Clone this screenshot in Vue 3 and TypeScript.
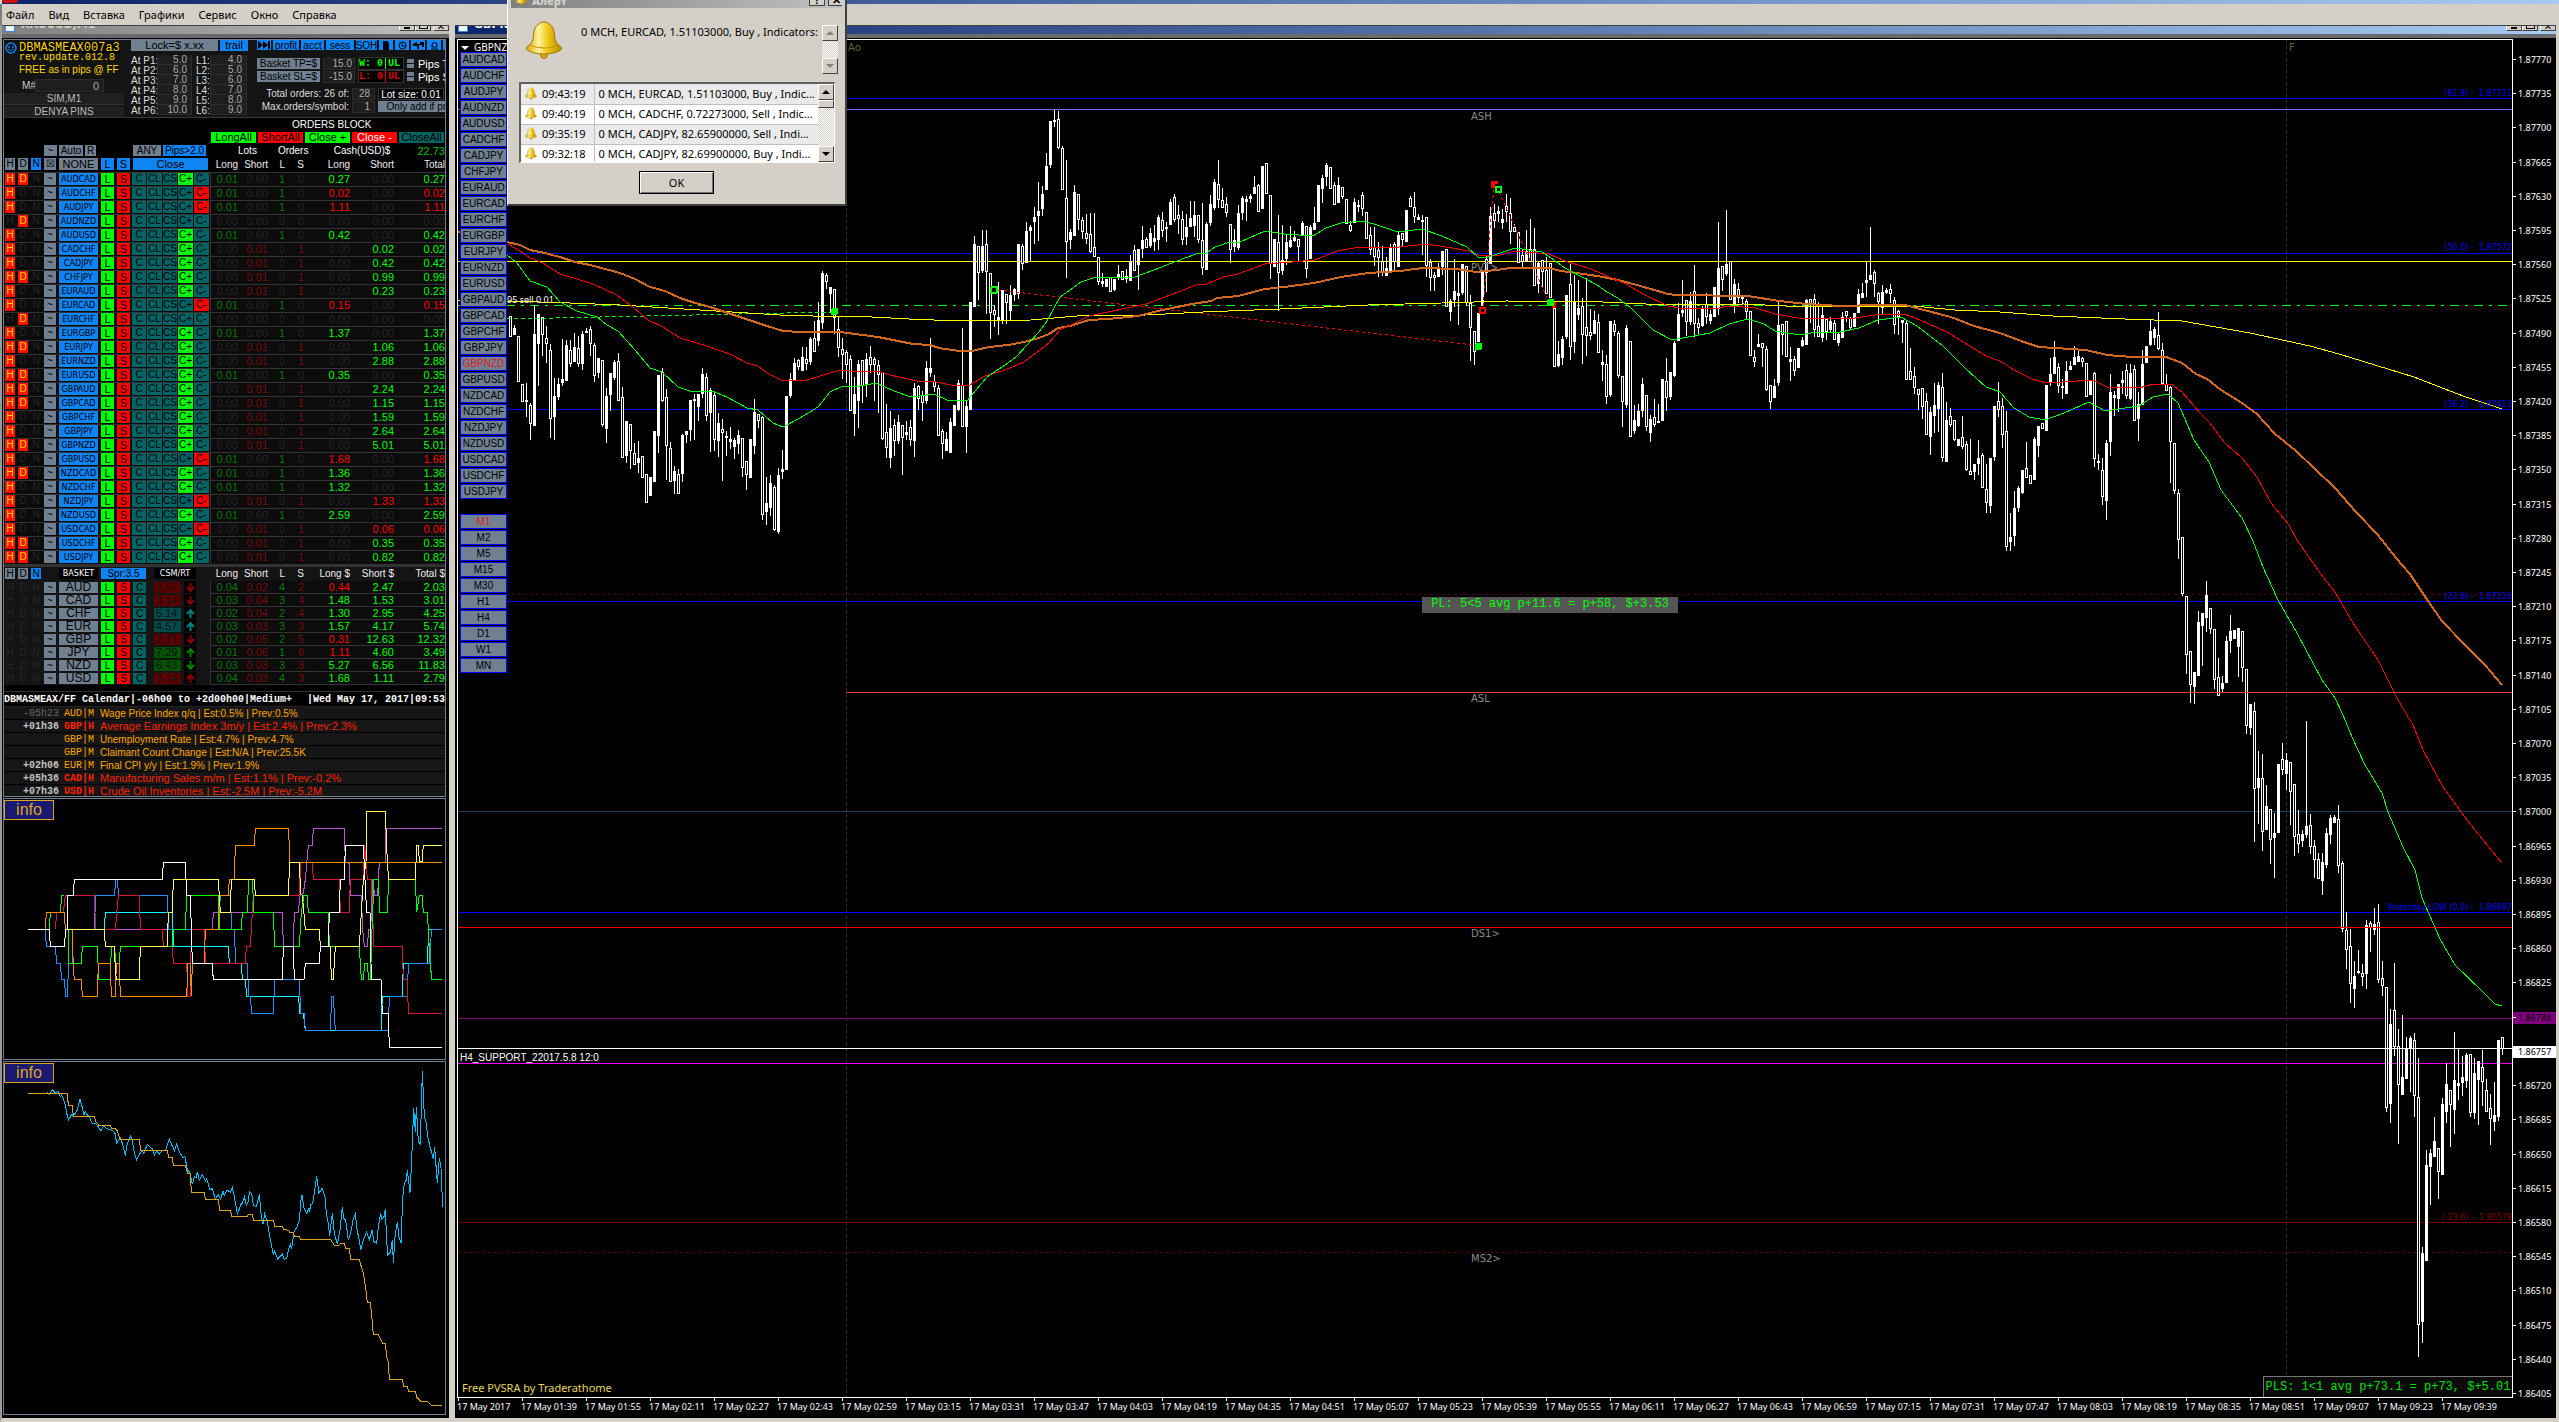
<script setup lang="ts">
const menu = ['Файл', 'Вид', 'Вставка', 'Графики', 'Сервис', 'Окно', 'Справка']

interface Pair { name: string; h: boolean; d: boolean; side: string; cash: number }
const pairs: Pair[] = `AUDCAD HD L 0.27|AUDCHF H L -0.02|AUDJPY H L -1.11|AUDNZD D - 0|AUDUSD H L 0.42|CADCHF H S 0.02|CADJPY H S 0.42
CHFJPY HD S 0.99|EURAUD H S 0.23|EURCAD H L -0.15|EURCHF D - 0|EURGBP H L 1.37|EURJPY HD S 1.06|EURNZD H S 2.88
EURUSD HD L 0.35|GBPAUD HD S 2.24|GBPCAD HD S 1.15|GBPCHF H S 1.59|GBPJPY H S 2.64|GBPNZD HD S 5.01|GBPUSD H L -1.68
NZDCAD HD L 1.36|NZDCHF H L 1.32|NZDJPY H S -1.33|NZDUSD H L 2.59|USDCAD H S -0.06|USDCHF HD S 0.35|USDJPY HD S 0.82`
  .split(/[|\n]/).map(r => {
    const [name, flags, side, cash] = r.trim().split(' ')
    return { name, h: flags.includes('H'), d: flags.includes('D'), side, cash: Number(cash) }
  })
const fmt = (n: number) => Math.abs(n).toFixed(2)
const tone = (n: number) => (n === 0 ? 'zero' : n > 0 ? 'up' : 'down')

interface Basket { name: string; csm: string; tint: string; arrow: string; dir: string; cells: string[] }
const baskets: Basket[] = [
  'AUD 3.57 red v red 0.04 0.02 4 2 -0.44 2.47 2.03',
  'CAD 3.14 red v red 0.03 0.04 3 4 1.48 1.53 3.01',
  'CHF 5.14 teal ^ teal 0.02 0.04 2 4 1.30 2.95 4.25',
  'EUR 4.57 teal ^ teal 0.03 0.03 3 3 1.57 4.17 5.74',
  'GBP 2.71 red v red 0.02 0.05 2 5 -0.31 12.63 12.32',
  'JPY 7.29 green ^ green 0.01 0.06 1 6 -1.11 4.60 3.49',
  'NZD 6.43 green v green 0.03 0.03 3 3 5.27 6.56 11.83',
  'USD 3.14 red ^ red 0.04 0.03 4 3 1.68 1.11 2.79',
].map(s => {
  const p = s.split(' ')
  return { name: p[0], csm: p[1], tint: p[2], dir: p[3], arrow: p[4], cells: p.slice(5) }
})

const levels = [5, 6, 7, 8, 9, 10].map((p, i) => ({ n: i + 1, p: p.toFixed(1), l: (i + 4).toFixed(1) }))

const news = [
  { t: '-05h23', c: 'AUD', i: 'M', e: 'Wage Price Index q/q | Est:0.5% | Prev:0.5%', past: true },
  { t: '+01h36', c: 'GBP', i: 'H', e: 'Average Earnings Index 3m/y | Est:2.4% | Prev:2.3%' },
  { t: '', c: 'GBP', i: 'M', e: 'Unemployment Rate | Est:4.7% | Prev:4.7%' },
  { t: '', c: 'GBP', i: 'M', e: 'Claimant Count Change | Est:N/A | Prev:25.5K' },
  { t: '+02h06', c: 'EUR', i: 'M', e: 'Final CPI y/y | Est:1.9% | Prev:1.9%' },
  { t: '+05h36', c: 'CAD', i: 'H', e: 'Manufacturing Sales m/m | Est:1.1% | Prev:-0.2%' },
  { t: '+07h36', c: 'USD', i: 'H', e: 'Crude Oil Inventories | Est:-2.5M | Prev:-5.2M' },
]

const strength = [
  { c: '#ba55d3', p: '313,748 487,748 637,748 640,697 847,697 850,799 880,799 883,697 895,697 900,646 910,640 916,598 925,496 937,496 940,445 1033,445 1036,547 1048,550 1051,646 1084,646 1088,748 1093,799 1102,799 1106,748 1112,748 1118,598 1124,646 1133,646 1138,547 1155,547 1158,445 1326,445' },
  { c: '#00ffff', p: '313,748 316,697 517,697 520,799 685,799 688,850 724,850 727,898 736,898 740,949 895,949 900,1000 910,1000 916,1051 1143,1051 1147,949 1207,949 1210,850 1282,850 1286,748 1294,748' },
  { c: '#1e90ff', p: '136,748 139,799 166,799 170,850 181,850 185,898 193,898 197,949 202,949 206,850 217,850 219,748 283,748 287,646 343,646 348,598 352,598 356,646 502,646 506,748 655,748 661,646 691,646 695,748 703,748 707,850 742,850 746,949 751,949 755,1000 820,1000 824,898 898,898 902,1000 912,1000 916,1051 991,1051 995,949 1000,949 1006,1051 1165,1051 1168,949 1222,949 1225,850 1290,850 1294,748 1326,748' },
  { c: '#dc143c', p: '166,748 170,697 190,697 196,646 283,646 287,748 346,748 355,646 418,646 421,748 487,748 490,799 517,799 520,850 560,850 564,949 571,949 574,748 613,748 616,850 736,850 739,799 751,799 760,646 898,646 902,547 937,547 940,598 1018,598 1021,697 1048,697 1051,598 1090,598 1094,496 1102,598 1114,598 1118,697 1121,799 1207,799 1210,898 1222,898 1225,1000 1326,1000' },
  { c: '#00ff00', p: '148,748 151,697 181,697 185,646 193,646' },
  { c: '#00ff00', p: '204,748 206,850 244,850 247,799 292,799 296,898 331,898 334,799 343,799 348,850 358,850 361,799 517,799 520,748 556,748 560,646 655,646 660,748 724,748 727,697 742,697 746,598 757,598 762,697 820,697 824,799 898,799 904,697 912,646 921,646 925,697 985,697 988,799 1078,799 1084,898 1090,898 1094,850 1102,850 1106,898 1112,898 1114,799 1122,598 1134,598 1140,697 1162,697 1166,598 1246,598 1250,697 1258,646 1266,646 1270,697 1282,697 1285,748 1290,850 1296,898 1326,898' },
  { c: '#ff8c00', p: '136,748 139,697 193,697 196,748 217,748 220,870 223,898 244,898 247,949 292,949 295,850 331,850 334,949 346,949 349,850 358,850 361,949 560,949 564,850 571,850 574,949 577,850 613,850 616,748 655,748 658,646 685,646 688,598 703,598 706,496 763,496 766,445 866,445 869,547 1326,547' },
  { c: '#ffff54', p: '204,748 313,748 316,799 343,799 346,870 349,898 418,898 421,799 502,799 505,697 517,697 520,598 655,598 661,697 691,697 694,598 763,598 766,646 865,646 869,547 898,547 902,640 907,646 916,748 958,748 961,799 991,799 994,898 1000,898 1006,799 1078,799 1084,697 1090,598 1098,547 1101,394 1156,394 1160,496 1162,547 1166,598 1246,598 1250,496 1255,496 1258,545 1266,545 1270,496 1326,496' },
  { c: '#ffffff', p: '84,748 148,748 151,799 193,799 197,748 202,748 204,646 220,646 223,598 487,598 490,547 556,547 560,646 571,646 574,748 577,850 636,850 640,898 847,898 850,799 880,799 883,898 912,898 916,850 958,850 961,799 985,799 988,697 1018,697 1021,598 1033,598 1036,496 1090,496 1095,600 1100,697 1110,697 1114,898 1143,898 1147,1000 1165,1000 1168,1102 1326,1102' },
]
const equityBlue = '142,128 148,132 157,120 166,128 175,125 181,140 185,135 193,155 196,165 200,190 206,210 214,195 217,193 220,198 232,180 240,148 245,165 252,195 256,185 262,195 268,200 276,220 289,222 303,243 310,228 320,235 340,243 345,250 350,280 362,262 368,285 376,317 382,280 391,258 397,272 403,310 410,330 420,310 427,302 431,310 442,283 452,293 458,297 463,316 470,303 478,312 487,302 496,302 508,268 515,285 520,293 523,303 530,283 538,305 548,322 555,320 562,360 570,368 577,403 583,380 588,383 592,365 598,390 607,375 617,393 620,386 630,420 637,415 646,448 655,433 662,448 669,423 673,437 681,420 692,427 697,413 703,440 712,492 722,465 727,460 733,440 739,465 745,455 748,425 755,430 760,465 769,470 778,433 785,510 789,523 794,493 802,515 811,570 820,615 823,603 833,626 847,612 852,628 860,626 866,598 871,583 875,597 882,545 892,530 898,510 903,450 906,436 912,475 920,490 925,477 928,487 932,465 938,460 945,415 950,378 957,430 966,415 975,440 979,490 985,520 989,557 997,490 1003,550 1012,583 1020,540 1027,470 1031,505 1037,510 1045,570 1052,550 1060,505 1066,492 1072,545 1078,570 1082,601 1090,570 1100,545 1108,570 1116,541 1122,575 1130,580 1135,530 1142,490 1146,508 1152,500 1156,478 1160,570 1163,616 1172,605 1177,570 1180,638 1185,560 1192,517 1197,560 1203,580 1208,445 1213,400 1218,392 1222,360 1230,428 1235,330 1241,175 1246,245 1249,170 1255,275 1261,283 1267,64 1273,200 1278,215 1284,265 1290,290 1300,328 1304,292 1312,400 1318,325 1323,355 1328,470'
const equityGold = '84,130 202,130 205,166 217,166 220,199 283,199 287,215 297,226 331,226 336,236 346,236 352,243 361,268 418,268 422,301 502,301 506,322 517,322 520,346 556,346 563,370 571,370 574,427 613,427 616,448 655,448 659,481 691,481 695,499 742,499 745,493 756,493 761,511 820,511 824,529 847,529 850,538 865,541 870,547 880,547 883,559 898,560 902,568 991,568 1003,586 1017,586 1021,580 1033,580 1037,595 1048,595 1052,628 1078,628 1084,650 1091,672 1097,715 1102,757 1111,757 1115,795 1120,853 1135,853 1140,865 1148,880 1156,880 1160,920 1165,935 1168,988 1207,988 1211,1009 1222,1009 1226,1024 1246,1024 1250,1042 1262,1054 1283,1054 1294,1066 1326,1066'

// One candle per minute: high, body top, body bottom, low; "+" marks a filled body.
const CANDLE_START = 510
const CANDLE_STEP = 4
const candleData = `316 316 336 336,325 328 334 334+,336 336 381 381,384 384 401 401,383 400 401 417+,403 405 423 440,305 334 425 425+,314 314 343 386+,317 317 334 356,326 338 343 363,344 350 418 438,378 396 416 440+,378 384 396 400+,339 379 382 386+,340 345 380 380+,340 350 363 367,333 347 361 361+,336 348 363 367,331 334 363 370+,328 331 332 332+,326 329 343 356,343 345 375 382,358 358 372 378+,360 360 424 427,388 396 428 443+,373 373 394 411+,360 362 377 380+,353 361 400 401,387 397 457 457,421 421 455 463+,424 424 450 469,443 453 464 464,441 458 462 473+,456 456 477 477,474 474 502 502,477 477 495 495+,431 431 481 481+,375 375 435 453+,368 372 400 402,389 397 445 480,442 448 481 481,466 471 480 494+,469 474 493 493,434 435 473 482+,431 431 434 443+,400 400 429 441+,394 399 400 440+,394 394 406 421+,368 374 393 398+,373 377 415 421,388 390 412 452+,391 395 439 451,413 423 440 457+,419 429 432 481,431 436 437 456+,427 439 441 449+,438 440 446 459+,430 435 443 454+,438 438 467 477,461 461 474 490,439 439 477 477+,399 412 445 454+,414 414 420 428,416 417 514 520,477 503 511 525+,475 483 507 516+,485 487 529 531,468 475 531 534+,450 469 471 479+,396 396 469 469+,373 379 395 398+,358 363 379 379+,359 360 366 370,347 357 370 370+,347 359 363 370,337 339 361 365+,321 338 351 352,302 320 340 346+,271 273 322 329+,273 275 281 289,287 287 293 312+,289 289 317 334,317 329 347 357,338 349 354 379,350 352 364 383,355 359 410 410,377 394 413 436+,360 364 400 428+,360 360 385 403,353 359 384 397+,346 357 364 373,357 359 364 401,360 365 374 413,372 372 438 440,404 432 447 458,411 428 457 468+,419 425 440 456,415 422 440 444+,425 425 437 475,421 432 434 440+,420 427 439 446,383 388 440 457+,385 386 398 410,391 395 402 421,361 368 400 404+,338 368 372 377+,375 381 386 392,385 388 435 435,429 431 443 459,432 439 450 450+,418 422 452 452+,405 405 425 425+,380 383 409 411+,328 385 426 426,401 406 426 453+,302 302 409 409+,236 244 306 306+,246 246 272 300,230 246 270 273+,230 244 271 314,273 273 312 339,305 310 314 327,282 317 320 335+,290 290 320 324+,294 294 302 324,285 295 310 320+,288 289 294 301+,244 244 293 299+,244 246 263 270,222 231 262 262+,225 227 230 261+,207 217 221 244+,182 211 215 241+,186 194 208 216+,153 166 189 189+,121 121 164 168+,110 120 121 127+,111 119 147 149,146 148 189 189,160 198 241 278,229 232 239 249+,185 192 235 235+,194 194 219 230,217 220 231 239,214 233 238 244,213 234 251 253,213 247 256 256,257 257 281 285,273 281 283 287+,279 279 286 286+,277 277 291 291,279 279 289 291+,265 274 277 280+,271 271 279 279,269 276 278 283+,255 261 280 280+,245 250 270 271,249 249 264 290+,226 240 248 258+,237 239 247 248,228 233 245 248+,225 238 241 251+,215 217 239 250+,212 220 230 237,222 227 228 242+,199 202 224 225+,194 197 219 222,205 215 218 234,211 219 239 245,214 227 236 245+,201 218 226 226+,201 215 225 237+,215 215 239 243,203 240 267 275,222 224 269 269+,195 204 222 226+,179 182 207 210+,160 184 199 208,188 200 207 207,197 204 212 217,224 224 249 263,229 240 246 252+,205 213 247 250+,196 198 212 220+,196 199 201 221+,194 196 198 203+,176 187 193 193+,184 185 211 211,166 166 208 208+,163 163 193 193,195 195 263 279,239 239 266 266+,215 242 272 311,225 260 270 275+,234 242 258 265+,226 240 246 248+,231 237 240 242+,239 239 246 262,221 223 235 235+,226 226 268 278,225 227 258 258+,207 223 229 229+,185 185 221 221+,175 178 188 203+,163 165 176 186+,167 167 188 188,182 185 204 204,177 185 202 202+,187 187 196 199,199 199 223 223,221 225 230 232,198 202 222 222+,200 205 206 212+,192 195 208 216,212 212 238 238,227 235 249 255,227 247 256 266,242 250 257 277,246 261 271 276,257 268 275 275+,244 248 272 272+,242 244 261 271,232 235 266 266+,233 233 239 247,210 210 241 241+,196 198 206 206,192 207 216 223,214 217 219 219+,215 220 221 255+,217 217 265 277,259 262 277 291,272 275 277 291,263 268 276 276+,251 251 266 275+,249 249 306 306,299 301 311 321+,259 291 299 307+,272 293 295 325+,264 264 292 295+,266 266 302 306,295 303 327 361,331 331 351 365,313 313 341 341+,272 272 305 305+,255 259 272 292,207 216 263 263+,204 213 220 228,206 211 213 222+,209 219 222 229+,194 206 211 222,198 213 231 244,224 227 231 231,232 232 262 262,250 255 261 267,230 251 260 260+,219 249 261 261,228 249 285 285,261 263 283 293+,260 260 271 288,257 270 293 293,263 263 297 297,308 308 366 366,341 354 365 367+,336 339 357 365+,295 295 336 339+,264 284 346 360,275 301 341 353+,280 308 314 320+,298 306 334 364,278 327 335 356,309 332 335 340,311 320 333 333+,314 322 352 352,350 362 364 381+,355 364 396 404,321 321 394 397+,320 324 331 336,331 333 375 378,376 376 401 427,325 328 404 408+,341 341 436 437,405 420 430 434+,404 411 425 427+,378 384 410 417+,395 395 426 431,415 419 432 442+,399 417 424 427,404 421 422 423+,379 379 420 420+,358 381 397 411,372 372 396 400+,341 343 375 377+,303 314 340 340+,280 310 312 317+,300 300 321 336,292 301 321 325+,265 291 323 337,318 323 327 334,306 308 325 327+,293 304 316 324,310 314 320 324+,287 287 316 316+,222 268 308 315+,266 266 279 291,210 264 273 276+,261 261 299 299,279 284 304 313+,283 289 297 303,297 297 298 304+,299 301 311 319,311 311 355 355,350 357 361 367,334 344 346 347+,343 343 347 367,346 349 389 391,385 385 401 409,379 386 397 397+,301 325 382 386+,324 324 334 355,321 321 356 356,347 359 361 381+,356 359 370 376,348 348 367 367+,337 340 345 347+,299 300 344 344+,299 299 304 323,294 299 329 337,302 326 336 336,307 315 337 342+,319 319 331 340,317 321 329 333+,320 323 339 339,332 334 342 346+,312 317 337 337+,311 311 315 322,317 318 327 330,313 313 326 326+,289 294 312 312+,283 293 297 297+,262 280 282 297+,227 275 279 280+,270 272 283 297,292 293 301 324,285 292 307 315+,288 290 292 294+,284 289 293 303,297 300 324 334,310 311 316 335,320 320 322 343+,321 323 379 379,348 371 379 379,367 376 387 394,389 389 394 410,388 388 406 419,393 401 434 434,407 412 436 455+,383 405 415 433+,382 385 408 432+,373 387 457 462,402 420 461 461+,408 416 424 427,420 420 439 441,439 439 445 445+,416 437 446 449,441 444 469 471,439 471 474 474,464 464 471 480+,440 458 463 475+,453 455 487 487,464 489 502 513,458 458 505 513+,406 406 456 461+,382 401 409 417,398 406 434 448,411 431 546 551,513 537 541 551+,491 508 535 546+,486 488 507 512+,470 470 492 494+,442 468 477 477,475 475 483 483,437 439 479 479+,426 426 445 457+,423 423 428 428,385 385 430 430+,358 374 382 386+,341 357 373 373+,363 367 385 393,379 386 387 399+,361 371 393 393+,361 366 369 369+,346 357 364 364+,349 356 361 361+,357 358 361 367,363 363 396 396,380 380 394 394+,372 373 458 467,454 461 462 470+,458 470 496 505,440 443 500 520+,374 392 441 456+,391 395 397 416+,384 384 398 412+,371 380 382 394+,364 370 395 399,364 373 398 400+,365 369 420 420,392 404 418 441+,350 364 404 404+,346 346 362 362+,320 331 344 346+,327 329 337 345+,312 335 348 350,343 350 383 383,374 384 390 391,386 387 441 483,443 443 490 494,489 493 539 559,537 537 593 596,596 596 654 674,651 651 684 703,672 672 686 704+,611 622 675 675+,613 613 625 666+,581 595 617 632+,608 608 628 634,629 629 679 689,658 677 695 696,676 683 688 692+,636 641 682 682+,615 631 640 653+,630 630 638 638+,628 628 646 677+,631 631 667 682,669 669 725 734,704 704 727 735+,702 711 788 842,751 778 787 824+,754 778 831 851,785 806 829 829+,809 809 839 864,813 833 837 878+,764 764 832 832+,743 759 769 775,753 760 773 790+,762 762 791 825,784 784 836 856,810 834 843 853,830 834 840 847+,721 826 834 838+,814 825 846 854,840 846 859 878,853 859 878 878,853 862 880 895+,828 833 864 868+,815 818 834 844+,815 817 822 823+,805 819 865 873,861 863 928 932,912 930 949 969,929 946 983 1003,961 976 988 1008+,950 971 972 974+,964 973 976 986,920 925 973 989+,921 923 927 952,908 924 929 935+,904 922 979 983,961 978 985 996,987 987 1107 1112,1009 1024 1103 1123+,963 1010 1046 1056,1029 1046 1084 1144,1015 1077 1094 1094+,1037 1048 1078 1078+,1036 1038 1047 1092+,1033 1040 1095 1117,1058 1097 1324 1357,1247 1253 1321 1343+,1150 1165 1260 1260+,1149 1153 1166 1205+,1117 1141 1156 1156+,1148 1148 1171 1199,1098 1104 1174 1174+,1063 1084 1111 1123+,1090 1090 1104 1147,1032 1080 1109 1134+,1049 1083 1085 1100+,1056 1077 1082 1096+,1053 1055 1080 1088+,1054 1054 1112 1117,1058 1073 1112 1119+,1061 1061 1079 1125+,1050 1067 1081 1106,1079 1090 1111 1111,1094 1108 1118 1145,1082 1115 1121 1131+,1040 1040 1116 1121+,1037 1037 1048 1055`

const rect = (x: number, y: number, w: number, h: number) => `M${x} ${y}h${w}v${h}h${-w}z`
let solids = ''
let holes = ''
candleData.split(',').forEach((row, i) => {
  const x = CANDLE_START + i * CANDLE_STEP
  const filled = row.endsWith('+')
  const [h, t, b, l] = row.replace('+', '').trim().split(' ').map(Number)
  solids += rect(x, h, 1, Math.max(1, l - h)) + rect(x - 1, t, 3, Math.max(1, b - t + 1))
  if (!filled && b - t > 1) holes += rect(x, t + 1, 1, b - t - 1)
})

const averages = [
  { c: '#ffff00', w: 1, p: '458,300 507,301 570,303 620,305 700,310 780,315 813,316 840,316 872,317 909,319 959,321 1031,320 1077,316 1146,315 1203,312 1280,309 1368,305 1442,303 1507,301 1603,302 1668,305 1744,304 1786,306 1913,306 1955,310 2000,312 2053,316 2125,319 2182,321 2250,333 2310,346 2339,354 2414,377 2463,396 2502,409' },
  { c: '#d2691e', w: 2, p: '458,232 507,242 520,245 530,250 545,253 560,257 575,262 590,265 605,269 620,273 635,279 650,287 665,291 680,298 695,303 710,307 725,312 740,317 755,322 770,327 783,331 800,332 840,332 863,335 878,337 893,340 913,344 930,345 939,348 959,351 972,351 989,347 1008,345 1024,342 1039,338 1049,334 1058,328 1070,326 1089,320 1108,319 1138,316 1158,311 1177,307 1192,304 1211,301 1217,298 1238,296 1265,289 1284,287 1314,283 1341,277 1368,273 1400,271 1423,268 1457,269 1476,272 1496,270 1511,268 1549,268 1561,271 1584,274 1603,277 1618,280 1637,285 1668,294 1676,295 1748,296 1779,301 1806,304 1840,306 1878,305 1905,305 1920,309 1951,317 1974,326 2000,333 2021,341 2039,347 2086,350 2107,355 2132,357 2166,357 2182,363 2196,374 2207,379 2221,390 2242,403 2257,414 2274,433 2296,451 2314,468 2335,488 2356,512 2378,535 2396,558 2410,574 2428,601 2442,621 2463,643 2485,665 2502,685' },
  { c: '#ff0000', w: 1, p: '508,244 520,251 530,258 543,263 560,274 577,279 593,284 617,295 633,307 648,320 663,327 680,338 707,346 732,355 747,363 758,366 767,373 783,381 807,380 830,373 840,370 860,372 878,371 890,375 917,381 936,382 951,385 968,386 985,376 1005,370 1024,362 1049,343 1060,330 1073,324 1089,316 1108,312 1146,304 1173,294 1196,285 1207,284 1223,277 1238,274 1265,264 1292,262 1315,260 1337,251 1360,247 1399,247 1427,244 1446,247 1469,251 1480,256 1500,255 1515,251 1549,254 1565,261 1591,269 1607,276 1626,284 1645,295 1668,306 1679,308 1714,309 1729,306 1756,308 1775,314 1798,318 1848,319 1882,314 1905,314 1920,320 1947,332 1986,356 2000,361 2014,370 2032,379 2046,383 2093,380 2107,387 2139,388 2153,384 2171,384 2182,392 2200,413 2210,423 2225,443 2242,458 2257,477 2271,503 2289,525 2297,540 2323,577 2335,592 2353,623 2378,660 2398,700 2413,725 2423,750 2443,787 2467,820 2483,840 2502,863' },
  { c: '#00ff00', w: 1, p: '507,255 517,263 530,281 547,287 560,302 577,311 597,317 607,325 618,331 635,350 650,368 662,372 678,387 690,391 712,391 727,397 747,408 758,410 773,423 783,427 800,418 818,407 830,392 843,386 855,387 876,383 894,391 911,397 934,394 947,400 967,401 976,390 987,377 1005,365 1016,357 1039,332 1047,321 1060,297 1070,290 1081,282 1093,278 1135,277 1154,270 1177,261 1196,254 1207,253 1215,247 1227,243 1240,242 1265,231 1284,234 1313,236 1326,228 1341,223 1364,221 1380,226 1395,231 1406,231 1422,229 1442,236 1467,247 1478,257 1488,257 1515,248 1542,252 1551,258 1565,268 1584,278 1597,285 1607,292 1618,298 1630,307 1653,330 1672,340 1710,333 1729,324 1748,319 1764,324 1775,331 1800,335 1817,332 1840,332 1859,328 1878,320 1901,317 1917,326 1943,346 1966,369 1986,387 2000,392 2014,408 2029,417 2045,420 2064,413 2089,402 2105,411 2139,406 2153,397 2168,394 2178,403 2194,440 2209,462 2221,490 2242,518 2253,541 2263,567 2278,600 2297,633 2322,680 2335,698 2343,715 2352,737 2365,765 2382,793 2388,812 2403,847 2415,870 2422,898 2440,939 2455,965 2483,992 2495,1004 2502,1006' },
]

const behind = [
  { y: 98, c: '#0000ff' },
  { y: 109, c: '#7b68ee' },
  { y: 253, c: '#0000ff' },
  { y: 261, c: '#ffff00' },
  { y: 305, c: '#00ff00', d: '9 6 3 6' },
  { y: 409, c: '#0000ff' },
  { y: 594, c: '#500000', d: '3 3' },
  { y: 601, c: '#0000ff' },
  { y: 811, c: '#1c3f60' },
  { y: 912, c: '#0000ff' },
  { y: 1018, c: '#800080' },
  { y: 1063, c: '#ff00ff' },
  { y: 1222, c: '#800000' },
  { y: 1252, c: '#500000', d: '3 3' },
]
const front = [
  { y: 692, x: 388, c: '#e0452c' },
  { y: 927, x: 0, c: '#ff0000' },
  { y: 1048, x: 0, c: '#ffffff' },
]
const pivots = [
  { y: 120, t: 'ASH' }, { y: 271, t: 'PVT>' }, { y: 702, t: 'ASL' }, { y: 937, t: 'DS1>' }, { y: 1262, t: 'MS2>' },
]
const fibs = [
  { y: 96, t: '(61.8) -  1.87731', c: '#0000ff' },
  { y: 250, t: '(50.0) -  1.87572', c: '#0000ff' },
  { y: 407, t: '(38.2) -  1.87413', c: '#0000ff' },
  { y: 599, t: '(23.6) -  1.87216', c: '#0000ff' },
  { y: 910, t: 'Yesterday LOW (0.0) -  1.86897', c: '#0000ff' },
  { y: 1220, t: '(-23.6) -  1.86578', c: '#800000' },
]
const prices = Array.from({ length: 40 }, (_, i) => {
  if (i === 28) return { t: '1.86788', k: 'bid' }
  if (i === 29) return { t: '1.86757', k: 'last' }
  return { t: ((187770 - i * 35) / 100000).toFixed(5), k: '' }
})
const two = (n: number) => String(n).padStart(2, '0')
const times = ['17 May 2017', ...Array.from({ length: 31 }, (_, i) => {
  const m = 99 + i * 16
  return `17 May ${two(Math.floor(m / 60))}:${two(m % 60)}`
})]
const frames = ['M1', 'M2', 'M5', 'M15', 'M30', 'H1', 'H4', 'D1', 'W1', 'MN']
const alerts = [
  { t: '09:43:19', m: '0 MCH, EURCAD, 1.51103000, Buy , Indic...' },
  { t: '09:40:19', m: '0 MCH, CADCHF, 0.72273000, Sell , Indic...' },
  { t: '09:35:19', m: '0 MCH, CADJPY, 82.65900000, Sell , Indi...' },
  { t: '09:32:18', m: '0 MCH, CADJPY, 82.69900000, Buy , Indi...' },
]
</script>

<template>
  <div class="app">
    <svg class="defs" width="0" height="0" aria-hidden="true">
      <defs>
        <linearGradient id="gold" x1="0" y1="0" x2="1" y2="0">
          <stop offset="0" stop-color="#d9a400" /><stop offset="0.35" stop-color="#fff3a0" />
          <stop offset="0.6" stop-color="#f0c818" /><stop offset="1" stop-color="#b98600" />
        </linearGradient>
        <symbol id="bell" viewBox="0 0 38 38">
          <circle cx="19" cy="34" r="3.4" fill="#e0a800" stroke="#9c7400" />
          <path d="M19 1c-3 0-4 1-5 2-4 2-5 6-5.500 11C8 21 6 23 1.500 26.500c-2 3 8 6.500 17.500 6.500s19.500-3.500 17.500-6.500C32 23 30 21 29.500 14 29 9 28 5 24 3c-1-1-2-2-5-2z" fill="url(#gold)" stroke="#9c7400" />
          <path d="M5 24.500q14 5 28 0" fill="none" stroke="#c89300" />
        </symbol>
      </defs>
    </svg>

    <div class="title-main"><i class="app-ico"></i></div>
    <nav class="menu"><a v-for="m in menu" :key="m" href="#">{{ m }}</a></nav>

    <main class="desk">
      <section class="win win-left">
        <header class="bar inactive">
          <i class="win-ico"></i><b>XAUUSD,M1</b>
          <span class="caps"><button aria-label="Minimize"><i class="mn"></i></button><button aria-label="Maximize"><i class="mx"></i></button><button class="x" aria-label="Close">✕</button></span>
        </header>
        <div class="left-body">
          <div class="panel panel-orders">
            <div class="ctrl">
              <div class="ctrl-a">
                <div class="brand">
                  <svg width="12" height="12" viewBox="0 0 12 12"><circle cx="6" cy="6" r="5" fill="none" stroke="#0f84f5" stroke-width="1.500" /><circle cx="4" cy="5" r="1" fill="#0f84f5" /><circle cx="8" cy="5" r="1" fill="#0f84f5" /><path d="M3 7q3 3 6 0" fill="none" stroke="#0f84f5" /></svg>
                  <div><p class="b1">DBMASMEAX007a3</p><p class="b2">rev.update.012.8</p><p class="b3">FREE as in pips @ FF</p></div>
                </div>
                <div class="magic"><label for="magic">M#</label><input id="magic" value="0"></div>
                <button class="wide">SIM,M1</button>
                <button class="wide">DENYA PINS</button>
              </div>
              <div class="ctrl-b">
                <div class="lock"><button class="slate">Lock=$ x.xx</button><button class="blue">trail</button></div>
                <div v-for="l in levels" :key="l.n" class="lvl">
                  <label :for="'p' + l.n">At P{{ l.n }}:</label><input :id="'p' + l.n" :value="l.p">
                  <label :for="'l' + l.n">L{{ l.n }}:</label><input :id="'l' + l.n" :value="l.l">
                </div>
              </div>
              <div class="ctrl-c">
                <div class="tabs">
                  <button class="blue t14" aria-label="Skip"><svg width="12" height="8" viewBox="0 0 12 8"><path d="M0 0l5 4-5 4zM5 0l5 4-5 4zM10 0h2v8h-2z" /></svg></button>
                  <button class="blue t26">profit</button><button class="blue t23">acct</button><button class="blue t28">sess</button><button class="blue t21">SOH</button>
                  <button class="blue t14" aria-label="File"><svg width="8" height="9" viewBox="0 0 8 9"><path d="M1 0h4l2 2v7H1z" /></svg></button>
                  <button class="blue t14" aria-label="Clock"><svg width="9" height="9" viewBox="0 0 9 9"><circle cx="4.500" cy="4.500" r="3.500" fill="none" stroke="#000" /><path d="M4 2v3h3" fill="none" stroke="#000" /></svg></button>
                  <button class="blue t14" aria-label="Announce"><svg width="11" height="9" viewBox="0 0 11 9"><path d="M0 3l4-2v2h3V1h4v5H9V4H6v4H4V5H0z" /></svg></button>
                  <button class="blue t14" aria-label="Alarm"><svg width="9" height="9" viewBox="0 0 9 9"><path d="M1 8h7M2 6V4a2 2 0 0 1 5 0v2z" fill="none" stroke="#000" /></svg></button>
                  <button class="blue t14" aria-label="More"></button>
                </div>
                <div class="bsk">
                  <button class="slate">Basket TP=$</button><input aria-label="Basket TP" value="15.0">
                  <span class="wl g">W: 0<i></i>UL</span><span class="spin"><i></i><i></i></span><span class="pips">Pips TP</span>
                </div>
                <div class="bsk">
                  <button class="slate">Basket SL=$</button><input aria-label="Basket SL" value="-15.0">
                  <span class="wl r">L: 0<i></i>UL</span><span class="spin"><i></i><i></i></span><span class="pips">Pips SL</span>
                </div>
                <div class="tot first"><label for="tot">Total orders: 26 of:</label><input id="tot" value="28"><span class="lot">Lot size: 0.01</span></div>
                <div class="tot"><label for="mx">Max.orders/symbol:</label><input id="mx" value="1"><button class="slate only">Only add if profit</button></div>
              </div>
            </div>

            <div class="ob"><span>ORDERS BLOCK</span><span class="ob-f">F</span></div>
            <div class="acts">
              <button class="g">LongAll</button><button class="r">ShortAll</button><button class="g">Close +</button><button class="r w">Close -</button><button class="t">CloseAll</button>
            </div>
            <div class="rowa">
              <button class="slate s13">~</button><button class="slate s24">Auto</button><button class="slate s11">R</button>
              <button class="slate s28">ANY</button><button class="blue s43">Pips&gt;2.0</button>
              <span class="lots">Lots</span><span class="ords">Orders</span><span class="cash">Cash(USD)$</span><span class="sum">22.73</span>
            </div>

            <table class="grid">
              <colgroup>
                <col class="w13"><col class="w13"><col class="w13"><col class="w15"><col class="w42"><col class="w16"><col class="w16">
                <col class="w15"><col class="w16"><col class="w15"><col class="w16"><col class="w16">
                <col class="w30"><col class="w30"><col class="w17"><col class="w19"><col class="w46"><col class="w44"><col>
              </colgroup>
              <thead>
                <tr>
                  <th><button class="slate">H</button></th><th><button class="slate">D</button></th><th><button class="blue">N</button></th>
                  <th><button class="slate">☒</button></th><th><button class="slate big">NONE</button></th><th><button class="blue big">L</button></th><th><button class="blue big">S</button></th>
                  <th colspan="5"><button class="blue big">Close</button></th>
                  <th class="n">Long</th><th class="n">Short</th><th class="n">L</th><th class="n">S</th><th class="n">Long</th><th class="n">Short</th><th class="n">Total</th>
                </tr>
              </thead>
              <tbody>
                <tr v-for="p in pairs" :key="p.name">
                  <td><button :class="p.h ? 'hot' : 'off'">H</button></td>
                  <td><button :class="p.d ? 'hot' : 'off'">D</button></td>
                  <td><button class="off">N</button></td>
                  <td><button class="slate">~</button></td>
                  <td><button class="blue sym">{{ p.name }}</button></td>
                  <td><button class="g big">L</button></td>
                  <td><button class="r big">S</button></td>
                  <td class="cl"><button class="t">C</button></td><td class="cl"><button class="t">CL</button></td><td class="cl"><button class="t">CS</button></td>
                  <td class="cl"><button :class="p.cash > 0 ? 'g' : 't'">C+</button></td>
                  <td class="cl"><button :class="p.cash < 0 ? 'r' : 't'">C-</button></td>
                  <td class="n vl" :class="p.side === 'L' ? 'dg' : 'zero'">{{ p.side === 'L' ? '0.01' : '0.00' }}</td>
                  <td class="n" :class="p.side === 'S' ? 'dr' : 'zero'">{{ p.side === 'S' ? '0.01' : '0.00' }}</td>
                  <td class="n" :class="p.side === 'L' ? 'dg' : 'zero'">{{ p.side === 'L' ? 1 : 0 }}</td>
                  <td class="n" :class="p.side === 'S' ? 'dr' : 'zero'">{{ p.side === 'S' ? 1 : 0 }}</td>
                  <td class="n" :class="p.side === 'L' ? tone(p.cash) : 'zero'">{{ p.side === 'L' ? fmt(p.cash) : '0.00' }}</td>
                  <td class="n" :class="p.side === 'S' ? tone(p.cash) : 'zero'">{{ p.side === 'S' ? fmt(p.cash) : '0.00' }}</td>
                  <td class="n" :class="tone(p.cash)">{{ fmt(p.cash) }}</td>
                </tr>
              </tbody>
            </table>

            <table class="grid basket">
              <colgroup>
                <col class="w13"><col class="w13"><col class="w13"><col class="w15"><col class="w42"><col class="w16"><col class="w16">
                <col class="w16"><col class="w5"><col class="w30"><col class="w15"><col class="w12">
                <col class="w30"><col class="w30"><col class="w17"><col class="w19"><col class="w46"><col class="w44"><col>
              </colgroup>
              <thead>
                <tr>
                  <th><button class="slate">H</button></th><th><button class="slate">D</button></th><th><button class="blue">N</button></th>
                  <th></th><th><button class="blk">BASKET</button></th><th colspan="3"><button class="blue">Spr:3.5</button></th><th></th>
                  <th colspan="2"><button class="blk csmh">CSM/RT</button></th><th></th>
                  <th class="n">Long</th><th class="n">Short</th><th class="n">L</th><th class="n">S</th><th class="n">Long $</th><th class="n">Short $</th><th class="n">Total $</th>
                </tr>
              </thead>
              <tbody>
                <tr v-for="b in baskets" :key="b.name">
                  <td><button class="off">H</button></td><td><button class="off">D</button></td><td><button class="off">N</button></td>
                  <td><button class="slate">~</button></td><td><button class="slate cur">{{ b.name }}</button></td>
                  <td><button class="g">L</button></td><td><button class="r">S</button></td><td><button class="t">C</button></td><td></td>
                  <td><span class="csm" :class="b.tint">{{ b.csm }}</span></td>
                  <td><span class="arr" :class="b.arrow"><svg width="9" height="9" viewBox="0 0 9 9"><path :d="b.dir === '^' ? 'M1 5l3.500-4L8 5M4.500 2v7' : 'M1 4l3.500 4L8 4M4.500 7V0'" fill="none" stroke="currentColor" stroke-width="2" /></svg></span></td>
                  <td></td>
                  <td class="n vl dg">{{ b.cells[0] }}</td><td class="n dr">{{ b.cells[1] }}</td><td class="n dg">{{ b.cells[2] }}</td><td class="n dr">{{ b.cells[3] }}</td>
                  <td v-for="k in [4, 5, 6]" :key="k" class="n" :class="tone(Number(b.cells[k]))">{{ b.cells[k].replace('-', '') }}</td>
                </tr>
              </tbody>
            </table>

            <div class="cal-head"><span>DBMASMEAX/FF Calendar|-06h00 to +2d00h00|Medium+</span><span>|Wed May 17, 2017|09:53</span></div>
            <ul class="cal">
              <li v-for="(n, i) in news" :key="i" :class="n.i">
                <span class="when" :class="{ past: n.past }">{{ n.t }}</span><span class="cur">{{ n.c }}|{{ n.i }}</span><span class="ev">{{ n.e }}</span>
              </li>
            </ul>
          </div>

          <div class="panel">
            <button class="info">info</button>
            <svg class="mini" viewBox="12 357 1323 780" preserveAspectRatio="none">
              <polyline v-for="(s, i) in strength" :key="i" :points="s.p" :stroke="s.c" />
            </svg>
          </div>
          <div class="panel">
            <button class="info">info</button>
            <svg class="mini" viewBox="12 36 1323 1056" preserveAspectRatio="none">
              <polyline :points="equityBlue" stroke="#00bfff" /><polyline :points="equityGold" stroke="#daa520" />
            </svg>
          </div>
        </div>
      </section>

      <section class="win win-right">
        <header class="bar active">
          <i class="win-ico"></i><b>GBPNZD,M1</b>
          <span class="caps"><button aria-label="Minimize"><i class="mn"></i></button><button aria-label="Maximize"><i class="mx"></i></button><button class="x" aria-label="Close">✕</button></span>
        </header>
        <div class="chart">
          <div class="plot">
            <svg class="canvas" width="100%" height="100%">
              <line x1="388" y1="0" x2="388" y2="100%" class="sep" />
              <line x1="1828" y1="0" x2="1828" y2="100%" class="sep" />
              <rect v-for="h in behind.filter(b => !b.d)" :key="h.y" x="0" :y="h.y - 40" width="100%" height="1" :fill="h.c" />
              <line v-for="h in behind.filter(b => b.d)" :key="h.y" x1="0" x2="100%" :y1="h.y - 39.5" :y2="h.y - 39.5" :stroke="h.c" :stroke-dasharray="h.d" />
              <g transform="translate(-458 -40)">
                <path :d="solids" fill="#fff" /><path :d="holes" fill="#000" />
                <line x1="507" y1="319" x2="832" y2="312" stroke="#0f0" stroke-dasharray="4 3" />
                <g stroke="#f00" stroke-dasharray="3 3">
                  <line x1="998" y1="290" x2="1474" y2="345" /><line x1="1483" y1="306" x2="1494" y2="186" /><line x1="1499" y1="192" x2="1547" y2="298" />
                </g>
                <text v-for="p in pivots" :key="p.t" x="1471" :y="p.y" class="piv">{{ p.t }}</text>
                <polyline v-for="a in averages" :key="a.c" :points="a.p" fill="none" :stroke="a.c" :stroke-width="a.w" />
                <rect x="991" y="287" width="6" height="6" rx="1" fill="#000" stroke="#0f0" stroke-width="2" />
                <rect x="831" y="308" width="7" height="7" rx="2" fill="#0f0" />
                <rect x="1475" y="343" width="7" height="7" rx="2" fill="#0f0" />
                <rect x="1480" y="308" width="5" height="5" fill="#000" stroke="#f00" stroke-width="2" />
                <path d="M1491 181h7v3h-3v4h-4z" fill="#f00" />
                <rect x="1496" y="187" width="5" height="5" fill="#000" stroke="#0f0" stroke-width="2" />
                <path d="M1555 302v5h-3" fill="none" stroke="#f00" stroke-width="2" />
                <rect x="1547" y="299" width="7" height="7" rx="2" fill="#0f0" />
                <text x="507" y="303" class="ord">95 sell 0.01</text>
                <text x="460" y="1061" class="sup">H4_SUPPORT_22017.5.8 12:0</text>
                <text x="462" y="1392" class="pvs">Free PVSRA by Traderathome</text>
                <text x="848" y="51" class="ses">Ao</text><text x="2289" y="51" class="ses">F</text>
              </g>
              <rect v-for="h in front" :key="h.y" :x="h.x" :y="h.y - 40" width="100%" height="1" :fill="h.c" />
              <text v-for="f in fibs" :key="f.t" x="100%" :y="f.y - 40" class="fib" :fill="f.c">{{ f.t }}</text>
            </svg>
            <div class="sym-title"><i></i>GBPNZD,M1</div>
            <div class="switch">
              <button v-for="p in pairs" :key="p.name" :class="{ on: p.name === 'GBPNZD' }">{{ p.name }}</button>
            </div>
            <div class="switch tf">
              <button v-for="f in frames" :key="f" :class="{ on: f === 'M1' }">{{ f }}</button>
            </div>
            <div class="pl">PL: 5&lt;5 avg p+11.6 = p+58, $+3.53</div>
            <div class="pls">PLS: 1&lt;1 avg p+73.1 = p+73, $+5.01</div>
          </div>
          <div class="axis-p"><span v-for="p in prices" :key="p.t" :class="p.k">{{ p.t }}</span></div>
          <div class="axis-t"><span v-for="t in times" :key="t">{{ t }}</span></div>
        </div>
      </section>
    </main>

    <div class="dialog" role="dialog" aria-label="Алерт">
      <div class="dlg-bar"><svg width="12" height="12"><use href="#bell" /></svg><b>Алерт</b><button aria-label="Help">?</button><button aria-label="Close">✕</button></div>
      <div class="dlg-top">
        <svg width="38" height="38"><use href="#bell" /></svg>
        <p>0 MCH, EURCAD, 1.51103000, Buy , Indicators:</p>
        <div class="sb dim"><button aria-label="Up"><i class="up-a"></i></button><span></span><button aria-label="Down"><i class="dn-a"></i></button></div>
      </div>
      <div class="list">
        <table>
          <tbody>
            <tr v-for="a in alerts" :key="a.t">
              <td class="c1"><svg width="12" height="13"><use href="#bell" /></svg>{{ a.t }}</td><td>{{ a.m }}</td>
            </tr>
          </tbody>
        </table>
        <div class="sb"><button aria-label="Up"><i class="up-a"></i></button><em></em><span></span><button aria-label="Down"><i class="dn-a"></i></button></div>
      </div>
      <button class="ok">OK</button>
    </div>
  </div>
</template>

<style>
html, body { margin: 0; background: #d4d0c8; overflow: hidden; }
</style>

<style scoped>
* { box-sizing: border-box; }
.app { position: relative; display: flex; flex-direction: column; height: 100vh; background: #d4d0c8; font: 11px "Liberation Sans", sans-serif; color: #fff; overflow: hidden; }
.defs { position: absolute; }
button { margin: 0; padding: 0; border: 0; border-radius: 0; font: inherit; color: #000; background: none; line-height: 1; white-space: nowrap; }
input { margin: 0; border: 1px solid #2c2c2c; border-radius: 0; background: #1e1e1e; color: #aaa; font: inherit; text-align: right; padding: 0 4px; min-width: 0; }
p, ul { margin: 0; padding: 0; list-style: none; }

.title-main { flex: none; height: 4px; background: linear-gradient(90deg, #0a246a, #a6caf0); border-left: 2px solid #d4d0c8; }
.app-ico { display: block; width: 16px; height: 3px; background: #d01010; border-radius: 0 0 8px 8px; }
.menu { flex: none; height: 21px; display: flex; align-items: center; gap: 14px; padding-left: 4px; border-left: 2px solid #808080; font: 11px "Noto Sans", sans-serif; }
.menu a { color: #000; text-decoration: none; line-height: 20px; }

.desk { flex: 1; min-height: 0; display: flex; background: #808080; }
.win { display: flex; flex-direction: column; min-width: 0; min-height: 0; background: #000; border-bottom: 4px solid #d4d0c8; }
.win-left { flex: none; width: 449px; border-left: 2px solid #9a9a9a; }
.win-right { flex: 1; border-left: 6px solid #d4d0c8; border-right: 3px solid #d4d0c8; }
.bar { flex: none; height: 13px; display: flex; align-items: flex-start; gap: 6px; padding-left: 3px; border-top: 1px solid #404040; border-bottom: 4px solid #6a6a6a; overflow: hidden; font: bold 11px "DejaVu Sans", sans-serif; color: #d4d0c8; }
.bar b { line-height: 12px; margin-top: -7px; }
.bar.inactive { background: linear-gradient(90deg, #808080, #c0c0c0); background-clip: padding-box; }
.bar.active { background: linear-gradient(90deg, #0a246a, #a6caf0); background-clip: padding-box; color: #fff; }
.win-ico { width: 10px; height: 6px; background: #eef6ff; border: 1px solid #3a86e0; border-top: 0; }
.caps { margin-left: auto; display: flex; }
.caps button { width: 16px; height: 5px; background: #d4d0c8; border-right: 1px solid #404040; border-bottom: 1px solid #404040; border-left: 1px solid #fff; display: flex; justify-content: center; overflow: hidden; }
.caps .x { margin-left: 2px; line-height: 2px; font-size: 10px; font-weight: bold; }
.mn { width: 6px; height: 2px; background: #000; margin-top: 1px; }
.mx { width: 9px; height: 3px; border: 1px solid #000; border-top: 0; }

.left-body { flex: 1; min-height: 0; display: grid; grid-template-rows: 758px 262fr 354fr; gap: 1px; padding: 1px 3px 3px 1px; }
.panel { position: relative; border: 1px solid #708090; background: #000; overflow: hidden; min-height: 0; }
.mini { display: block; width: 100%; height: 100%; }
.mini polyline { fill: none; stroke-width: 3; shape-rendering: crispEdges; }
.info { position: absolute; left: 0; top: 1px; width: 50px; height: 20px; background: #191970; border: 1px solid #daa520; color: #daa520; font-size: 16px; }

.slate { background: #708090; }
.blue { background: #0f84f5; }
.g { background: #00ff00; }
.r { background: #ff0000; }
.t { background: #006464; }

.ctrl { height: 78px; display: flex; background: #141414; border-bottom: 1px solid #3a3a3a; }
.ctrl-a { width: 120px; display: flex; flex-direction: column; }
.brand { flex: none; display: flex; gap: 2px; padding: 2px 0 0 1px; height: 39px; color: #ffd700; white-space: nowrap; }
.b1 { font: 12px/12px "Liberation Mono", monospace; background: #000; }
.b2 { font: 10px/8px "Liberation Mono", monospace; }
.b3 { font: 10px/15px "Liberation Sans", sans-serif; }
.magic { flex: none; display: flex; align-items: center; height: 13px; padding-left: 18px; gap: 1px; }
.magic label { width: 12px; font-size: 10px; white-space: nowrap; color: #ccc; }
.magic input { width: 69px; height: 13px; }
.wide { flex: none; height: 12px; margin-top: 1px; background: #202020; border-bottom: 1px solid #333; color: #bbb; font-size: 10px; }
.ctrl-b { width: 117px; margin-left: 7px; }
.lock { display: flex; gap: 2px; height: 11px; margin-bottom: 4px; }
.lock .slate { width: 87px; }
.lock .blue { width: 28px; }
.lvl { display: flex; align-items: center; height: 10px; font-size: 10px; color: #ddd; }
.lvl label { width: 26px; white-space: nowrap; }
.lvl label + input + label { width: 14px; margin-left: 4px; }
.lvl input { width: 35px; height: 10px; line-height: 8px; border-width: 0 1px 1px; }
.lvl input:last-child { width: 37px; }
.ctrl-c { flex: 1; margin-left: 9px; overflow: hidden; }
.tabs { display: flex; gap: 2px; height: 10px; width: 220px; margin-bottom: 7px; font-size: 10px; }
.tabs button { flex: none; display: flex; align-items: center; justify-content: center; line-height: 9px; }
.t14 { width: 14px; } .t21 { width: 21px; } .t23 { width: 23px; } .t26 { width: 26px; } .t28 { width: 28px; }
.bsk { display: flex; align-items: center; width: 240px; height: 13px; gap: 3px; font-size: 10px; }
.bsk button { width: 63px; height: 11px; }
.bsk input { width: 32px; height: 12px; padding: 0 2px; }
.wl { width: 46px; height: 13px; background: #000; border: 1px solid #333; font: bold 10px/11px "Liberation Mono", monospace; display: flex; gap: 2px; white-space: nowrap; }
.wl i { width: 1px; height: 11px; background: currentColor; }
.wl.g { color: #00ff00; background: #000; } .wl.r { color: #e00000; background: #000; }
.spin { display: grid; gap: 1px; width: 7px; }
.spin i { height: 4px; background: #708090; }
.pips { font-size: 11px; margin-left: 1px; }
.tot { display: flex; align-items: center; height: 13px; gap: 3px; width: 240px; font-size: 10px; color: #ddd; }
.tot.first { margin-top: 4px; }
.tot label { width: 92px; text-align: right; white-space: nowrap; }
.tot input { width: 23px; height: 12px; }
.lot { width: 66px; height: 12px; line-height: 11px; border: 1px solid #333; background: #000; text-align: center; color: #fff; white-space: nowrap; }
.only { width: 90px; height: 11px; }
.ob { height: 13px; line-height: 14px; padding-left: 288px; font-size: 10px; white-space: nowrap; }
.ob-f { margin-left: 74px; }
.acts { display: flex; gap: 2px; height: 13px; padding: 1px 0 1px 207px; }
.acts button { width: 45px; }
.acts .w { color: #fff; }
.rowa { display: flex; align-items: center; height: 13px; padding-left: 40px; font-size: 10px; white-space: nowrap; }
.rowa button { height: 11px; margin-right: 2px; flex: none; font-size: 10px; }
.s13 { width: 13px; } .s24 { width: 24px; } .s11 { width: 11px; }
.rowa .s28 { width: 28px; margin-left: 35px; }
.s43 { width: 43px; }
.lots { margin-left: 30px; width: 40px; } .ords { width: 56px; } .cash { width: 84px; }
.sum { color: #10c010; font-size: 11px; }

.grid { width: 441px; table-layout: fixed; border-collapse: collapse; border-spacing: 0; background: #0c0c0c; }
.grid td, .grid th { padding: 0 2px 0 1px; height: 14px; line-height: 13px; font-weight: normal; border-bottom: 1px solid #333; white-space: nowrap; }
.grid thead th { height: 15px; border-bottom: 1px solid #333; background: #000; font-size: 10px; }
.grid button { display: block; width: 100%; height: 12px; font-size: 10px; line-height: 12px; }
.grid .cl { padding: 0 1px 0 0; }
.grid .n { text-align: right; padding: 0 2px 0 0; font-size: 11px; }
.grid th.n { font-size: 10px; color: #eee; }
.grid td:last-child, .grid th:last-child { padding-right: 0; }
.grid .big { font-size: 11px; }
.grid .hot { background: #ff1000; color: #ffd700; }
.grid .off { color: #262626; }
.grid .sym { font: 9px/12px "DejaVu Sans Condensed", "DejaVu Sans", sans-serif; }
.vl { border-left: 1px solid #333; }
.zero { color: #242424; } .up { color: #00ff00; } .down { color: #ff0000; } .dg { color: #0a780a; } .dr { color: #780a0a; }
.w5 { width: 5px; } .w12 { width: 12px; } .w13 { width: 13px; } .w15 { width: 15px; } .w16 { width: 16px; } .w17 { width: 17px; } .w19 { width: 19px; }
.w30 { width: 30px; } .w42 { width: 42px; } .w44 { width: 44px; } .w46 { width: 46px; }
.basket { background: #141414; border-top: 2px solid #333; margin-bottom: 6px; }
.basket td { height: 13px; line-height: 12px; border-bottom: 0; }
.basket td.n { border-bottom: 1px solid #333; background: #0c0c0c; }
.basket thead th { background: #141414; border-bottom: 0; }
.basket button { height: 11px; line-height: 11px; }
.basket .cur { font-size: 12px; }
.grid .blk { background: #000; color: #fff; font: 9px/11px "DejaVu Sans Condensed", "DejaVu Sans", sans-serif; }
.csm { display: block; height: 11px; line-height: 11px; padding-left: 2px; color: #111; }
.csm.red { background: #5c0000; } .csm.teal { background: #004c4c; } .csm.green { background: #005400; }
.arr { display: flex; justify-content: center; align-items: center; height: 12px; background: #000; }
.arr.red { color: #8b0000; } .arr.teal { color: #008080; } .arr.green { color: #008000; }

.cal-head { display: flex; justify-content: space-between; height: 16px; background: #000; border-top: 1px solid #333; border-bottom: 1px solid #222; font: bold 10px/15px "Liberation Mono", monospace; white-space: nowrap; }
.cal li { display: flex; height: 13px; line-height: 13px; background: #161616; border-bottom: 1px solid #000; white-space: nowrap; color: #ffa500; }
.when { width: 55px; text-align: right; font: bold 10px/13px "Liberation Mono", monospace; color: #c0c0c0; }
.when.past { color: #666; font-weight: normal; }
.cal .cur { width: 41px; padding-left: 5px; font: 10px/13px "Liberation Mono", monospace; }
.cal .ev { font-size: 10px; }
.cal .H { color: #ff2000; }
.cal .H .cur { font-weight: bold; }
.cal .H .ev { font-size: 11px; }

.chart { flex: 1; min-height: 0; display: grid; grid-template: minmax(0, 1fr) 20px / minmax(0, 1fr) 43px; padding: 1px 0 0 2px; }
.plot { position: relative; border: 1px solid #fff; overflow: hidden; }
.canvas { position: absolute; inset: 0; shape-rendering: crispEdges; }
.canvas text { white-space: pre; }
.sep { stroke: #333; stroke-dasharray: 3 3; }
.piv { font: 10px "DejaVu Sans", sans-serif; fill: #8c8c8c; }
.ses { font: 10px "DejaVu Sans", sans-serif; fill: #6b6432; }
.ord { font: 9px "Noto Sans", sans-serif; fill: #fff; }
.sup { font: 10px "Liberation Sans", sans-serif; fill: #fff; }
.pvs { font: 11px "Noto Sans", sans-serif; fill: #e6d85c; }
.fib { font: 8px "DejaVu Sans", sans-serif; text-anchor: end; }
.sym-title { position: absolute; left: 3px; top: 1px; display: flex; align-items: center; gap: 5px; font: 10px/13px "Noto Sans", sans-serif; }
.sym-title i { border: 4px solid transparent; border-top-color: #fff; border-bottom: 0; }
.switch { position: absolute; left: 2px; top: 12px; width: 47px; display: grid; gap: 1px; }
.switch.tf { top: 474px; }
.switch button { height: 15px; background: #708090; border: 1px solid #0000ff; font-size: 10px; }
.switch .on { color: #e02020; }
.pl { position: absolute; left: 964px; top: 557px; width: 256px; height: 16px; background: #555; color: #00ff00; font: 12px/15px "Liberation Mono", monospace; text-align: center; white-space: nowrap; }
.pls { position: absolute; right: 0; bottom: 0; width: 249px; height: 21px; background: #0a0a0a; border: 1px solid #777; border-width: 1px 0 0 1px; color: #00e000; font: 12px/20px "Liberation Mono", monospace; text-align: center; white-space: nowrap; }
.axis-p { grid-row: 1 / 3; grid-column: 2; display: flex; flex-direction: column; justify-content: space-between; padding: 15px 0 18px; font: 9px/12px "Noto Sans", sans-serif; }
.axis-p span { position: relative; padding-left: 5px; height: 12px; }
.axis-p span::before { content: ""; position: absolute; left: 0; top: 5px; width: 3px; height: 1px; background: #fff; }
.axis-p .bid { background: #800080; color: #000; }
.axis-p .last { background: #fff; color: #000; }
.axis-t { grid-row: 2; grid-column: 1; display: grid; grid-auto-flow: column; grid-auto-columns: 64px; justify-content: start; font: 9px/12px "Noto Sans", sans-serif; white-space: nowrap; }
.axis-t span { position: relative; padding-top: 3px; }
.axis-t span::before { content: ""; position: absolute; left: 1px; top: 0; width: 1px; height: 3px; background: #fff; }

.dialog { position: absolute; left: 507px; top: 0; width: 340px; height: 206px; background: #d4d0c8; border: 1px solid #404040; border-width: 0 2px 2px 1px; border-left-color: #fff; color: #000; font: 11px "Noto Sans", sans-serif; padding: 0 3px; }
.dlg-bar { height: 8px; display: flex; align-items: flex-end; gap: 5px; padding-left: 4px; background: linear-gradient(90deg, #808080, #c0c0c0); color: #d4d0c8; overflow: hidden; font: bold 11px/12px "Noto Sans", sans-serif; }
.dlg-bar svg { margin-bottom: 3px; flex: none; }
.dlg-bar b { flex: 1; margin-bottom: 1px; }
.dlg-bar button { width: 16px; height: 13px; margin: 0 -2px 2px 0; background: #d4d0c8; border: 1px solid #404040; font-weight: bold; flex: none; }
.dlg-top { display: flex; height: 74px; padding: 13px 4px 0 14px; }
.dlg-top p { margin: 2px 0 0 18px; line-height: 18px; white-space: nowrap; flex: 1; }
.sb { flex: none; width: 16px; display: flex; flex-direction: column; background: repeating-conic-gradient(#fff 0 25%, #d4d0c8 0 50%) 0 0 / 2px 2px; }
.dlg-top .sb { height: 49px; margin-top: 4px; }
.sb button { height: 16px; flex: none; background: #d4d0c8; border: 1px solid; border-color: #fff #404040 #404040 #fff; display: flex; align-items: center; justify-content: center; }
.sb em { height: 8px; background: #d4d0c8; border: 1px solid; border-color: #fff #404040 #404040 #fff; }
.sb span { flex: 1; }
.up-a, .dn-a { border: 4px solid transparent; }
.up-a { border-top: 0; border-bottom-color: #000; } .dn-a { border-bottom: 0; border-top-color: #000; }
.dim .up-a { border-bottom-color: #808080; } .dim .dn-a { border-top-color: #808080; }
.list { display: flex; width: 316px; height: 81px; margin-left: 8px; border: 1px solid; border-width: 2px 1px 1px 2px; border-color: #606060 #fff #fff #606060; background: #fff; overflow: hidden; }
.list table { width: 297px; table-layout: fixed; border-collapse: collapse; }
.list td { height: 20px; padding: 0 0 0 4px; border-bottom: 1px solid #c0c0c0; white-space: nowrap; overflow: hidden; line-height: 18px; }
.list .c1 { width: 73px; border-right: 1px solid #c0c0c0; }
.list .c1 svg { vertical-align: -2px; margin-right: 5px; }
.list tr:nth-child(odd) { background: #eaeaea; }
.list .sb { height: 78px; }
.ok { display: block; width: 75px; height: 23px; margin: 8px 0 0 128px; background: #d4d0c8; border: 1px solid #000; box-shadow: inset 1px 1px #fff, inset -1px -1px #707070; }
</style>
